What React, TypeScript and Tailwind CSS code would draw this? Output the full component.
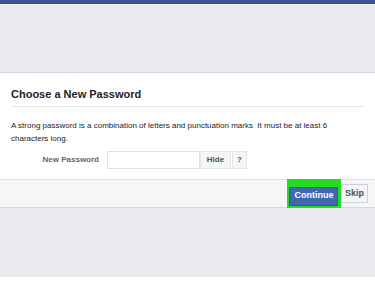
export default function App() {
  return (
    <div className="w-[375px] h-[300px] bg-white overflow-hidden font-['Liberation_Sans',Arial,sans-serif]">
      <div className="h-[4px] bg-[#3b5998] border-b border-[#2d4a86]" />
      <div className="h-[68px] bg-[#e9eaed] border-t border-[#f3f4f6]" />
      <div className="bg-white border-t border-[#d3d6db]">
        <div className="px-[11px] pt-[15px]">
          <h2 className="text-[11px] leading-[13px] font-bold text-[#1d2129] pb-[5px] border-b border-[#e5e5e5]">
            Choose a New Password
          </h2>
          <p className="mt-[12px] text-[8px] leading-[13px] text-[#1d2129]">
            A strong password is a combination of letters and punctuation marks&nbsp; It must be at least 6 characters long.
          </p>
          <div className="mt-[6px] flex items-center h-[18px]">
            <label className="w-[96px] text-right pr-[8px] text-[8px] font-bold text-[#606770]">New Password</label>
            <input className="w-[93px] h-[18px] border border-[#dddfe2] bg-white outline-none" />
            <button className="h-[18px] w-[31px] bg-[#f5f6f7] border border-[#e4e6ea] text-[8px] font-bold text-[#4b4f56]">
              Hide
            </button>
            <button className="h-[18px] w-[15px] ml-[1px] bg-[#f5f6f7] border border-[#e4e6ea] text-[8px] font-bold text-[#4b4f56]">
              ?
            </button>
          </div>
        </div>
        <div className="mt-[10px] h-[29px] bg-[#f5f6f7] border-t border-[#dddfe2] border-b border-b-[#d3d6db] flex items-center justify-end pr-[7px]">
          <div className="p-[2.5px] bg-[#22dd22]">
            <button className="h-[19px] px-[4px] bg-[#4267b2] border border-[#365899] text-white text-[9px] font-bold">
              Continue
            </button>
          </div>
          <button className="h-[19px] px-[3px] bg-[#f6f7f9] border border-[#ced0d4] text-[#4b4f56] text-[9px] font-bold">
            Skip
          </button>
        </div>
      </div>
      <div className="h-[69px] bg-[#e9eaed]" />
      <div className="bg-white" />
    </div>
  );
}
